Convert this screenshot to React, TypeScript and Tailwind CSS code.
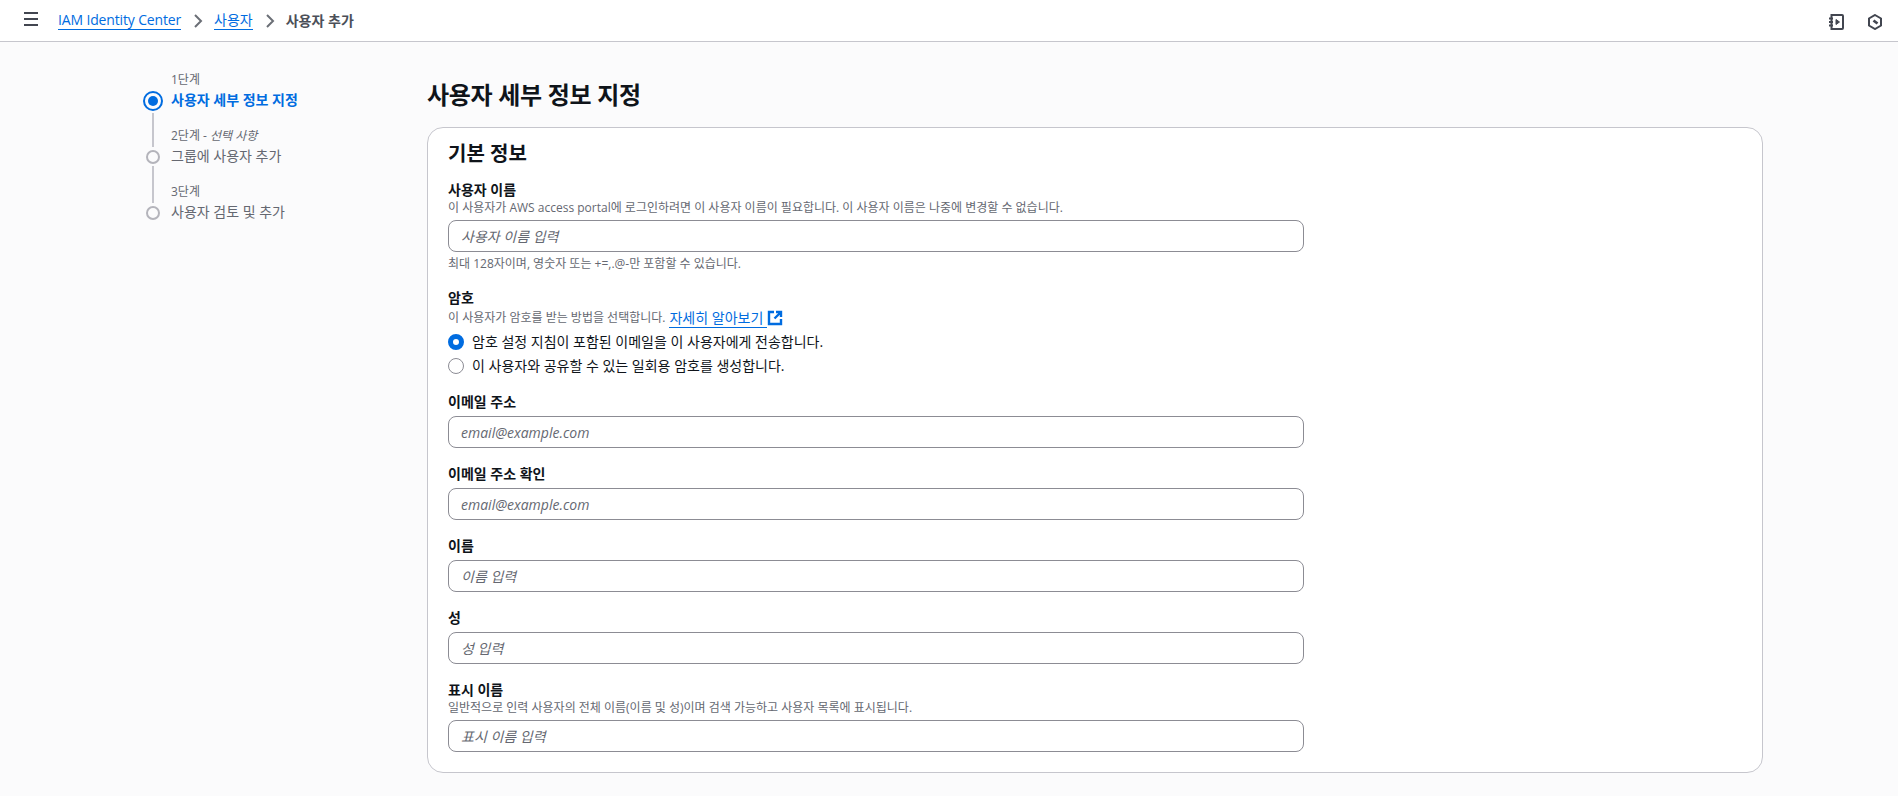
const FONT = "font-['Open_Sans','Noto_Sans_CJK_KR',sans-serif]";

const STEPS = [
  { step: "1단계", title: "사용자 세부 정보 지정", active: true },
  { step: "2단계", optional: "선택 사항", title: "그룹에 사용자 추가" },
  { step: "3단계", title: "사용자 검토 및 추가" },
];

function Chevron() {
  return (
    <svg viewBox="0 0 16 16" className="w-4 h-4 text-[#6b6f76]" fill="none" stroke="currentColor" strokeWidth="2">
      <path d="M5 2 11 8 5 14" />
    </svg>
  );
}

function TextField({ placeholder }: { placeholder: string }) {
  return (
    <input
      placeholder={placeholder}
      className="block w-[856px] h-[32px] rounded-lg border border-[#8c8c94] bg-white px-3 text-sm italic text-[#0f141a] placeholder:text-[#656871] outline-none"
    />
  );
}

function Field({
  label,
  desc,
  placeholder,
  className,
}: {
  label: string;
  desc?: string;
  placeholder: string;
  className?: string;
}) {
  return (
    <div className={className}>
      <div className="text-sm font-bold leading-[18px] text-[#0f141a]">{label}</div>
      {desc ? <div className="mt-px text-xs leading-[16px] text-[#656871]">{desc}</div> : null}
      <div className={desc ? "mt-1" : "mt-[5px]"}>
        <TextField placeholder={placeholder} />
      </div>
    </div>
  );
}

function Radio({ checked, label }: { checked?: boolean; label: string }) {
  return (
    <label className="flex items-center gap-2 h-[24px] text-sm text-[#0f141a]">
      <span
        className={
          checked
            ? "w-4 h-4 rounded-full border-[5px] border-[#006ce0] bg-white"
            : "w-4 h-4 rounded-full border border-[#8c8c94] bg-white"
        }
      />
      {label}
    </label>
  );
}

export default function App() {
  return (
    <div className={`${FONT} min-h-[796px] bg-[#fbfbfc] text-[#0f141a]`}>
      <header className="h-[42px] bg-white border-b border-[#c6c6cd] flex items-center pl-[23px] pr-[15px]">
        <svg viewBox="0 0 16 16" className="w-4 h-4 text-[#424650] -mt-[3px]" fill="none" stroke="currentColor" strokeWidth="2">
          <path d="M1 2h14M1 8h14M1 14h14" />
        </svg>
        <nav className="flex items-center ml-[19px] text-sm">
          <a className="text-[#006ce0] border-b border-[#006ce0] leading-[18px] tracking-[-0.15px]">IAM Identity Center</a>
          <span className="ml-[9px] mr-[8px]"><Chevron /></span>
          <a className="text-[#006ce0] border-b border-[#006ce0] leading-[18px]">사용자</a>
          <span className="ml-[9px] mr-[8px]"><Chevron /></span>
          <span className="font-bold text-[#4b4f58]">사용자 추가</span>
        </nav>
        <div className="ml-auto flex items-center gap-[23px] mt-[2px]">
          <svg viewBox="0 0 16 16" className="w-4 h-4 text-[#424650]" fill="none" stroke="currentColor" strokeWidth="2">
            <path d="M3.500 1h10.500a1 1 0 0 1 1 1v12a1 1 0 0 1-1 1H3.500V1Z" />
            <path d="M1 4.500h4M1 8h4M1 11.500h4" />
            <path d="M8 5.500v5L11.500 8Z" fill="currentColor" strokeWidth="1" />
          </svg>
          <svg viewBox="0 0 16 16" className="w-4 h-4 text-[#424650]" fill="none" stroke="currentColor" strokeWidth="2">
            <path d="M8 1 14 4.500v7L8 15l-6-3.500v-7Z" />
            <path d="M6.500 6.500 10.500 9.500" strokeWidth="2.800" />
          </svg>
        </div>
      </header>

      <div className="flex">
        <aside className="w-[427px] shrink-0 pl-[143px] pt-[29px]">
          <ol>
            {STEPS.map((s, i) => (
              <li key={s.step} className="relative h-[56px] pl-[28px] pt-px">
                <div className="text-xs leading-[16px] text-[#656871]">
                  {s.step}
                  {s.optional ? (
                    <>
                      {" - "}
                      <i>{s.optional}</i>
                    </>
                  ) : null}
                </div>
                <div
                  className={
                    s.active
                      ? "text-sm leading-[20px] mt-[2px] font-bold text-[#006ce0]"
                      : "text-sm leading-[20px] mt-[2px] text-[#656871]"
                  }
                >
                  {s.title}
                </div>
                {s.active ? (
                  <span className="absolute left-0 top-[20px] w-[20px] h-[20px] rounded-full border-2 border-[#006ce0] flex items-center justify-center">
                    <span className="w-[10px] h-[10px] rounded-full bg-[#006ce0]" />
                  </span>
                ) : (
                  <span className="absolute left-[3px] top-[23px] w-[14px] h-[14px] rounded-full border-2 border-[#b4b4bb]" />
                )}
                {i === 0 ? <span className="absolute left-[9px] top-[42px] h-[34px] w-[2px] bg-[#c6c6cd]" /> : null}
                {i === 1 ? <span className="absolute left-[9px] top-[39px] h-[37px] w-[2px] bg-[#c6c6cd]" /> : null}
              </li>
            ))}
          </ol>
        </aside>

        <main className="w-[1336px] pt-[38px]">
          <h1 className="text-2xl leading-[30px] font-bold tracking-[-0.3px] text-[#0f141a]">
            사용자 세부 정보 지정
          </h1>
          <section className="mt-[17px] rounded-2xl border border-[#c6c6cd] bg-white px-5 pt-[13px] pb-5">
            <h2 className="text-xl leading-[26px] font-bold">기본 정보</h2>

            <Field
              className="mt-[14px]"
              label="사용자 이름"
              desc="이 사용자가 AWS access portal에 로그인하려면 이 사용자 이름이 필요합니다. 이 사용자 이름은 나중에 변경할 수 없습니다."
              placeholder="사용자 이름 입력"
            />
            <div className="text-xs leading-[16px] text-[#656871] mt-1">
              최대 128자이며, 영숫자 또는 +=,.@-만 포함할 수 있습니다.
            </div>

            <div className="mt-[17px]">
              <div className="text-sm font-bold leading-[18px]">암호</div>
              <div className="flex items-center h-[20px] text-xs leading-[20px] text-[#656871] mt-px">
                이 사용자가 암호를 받는 방법을 선택합니다.
                <a className="ml-1 flex items-center text-sm text-[#006ce0]">
                  <span className="border-b border-[#006ce0] pr-[4px] leading-[19px]">자세히 알아보기</span>
                  <svg viewBox="0 0 16 16" className="w-4 h-4" fill="none" stroke="currentColor" strokeWidth="2.400">
                    <path d="M7 2H2v12h12V9" />
                    <path d="M9 2h5v5M14 2 7.500 8.500" />
                  </svg>
                </a>
              </div>
              <div className="mt-[2px]">
                <Radio checked label="암호 설정 지침이 포함된 이메일을 이 사용자에게 전송합니다." />
                <Radio label="이 사용자와 공유할 수 있는 일회용 암호를 생성합니다." />
              </div>
            </div>

            <div className="flex flex-col gap-[17px] mt-[15px]">
              <Field label="이메일 주소" placeholder="email@example.com" />
              <Field label="이메일 주소 확인" placeholder="email@example.com" />
              <Field label="이름" placeholder="이름 입력" />
              <Field label="성" placeholder="성 입력" />
              <Field
                label="표시 이름"
                desc="일반적으로 인력 사용자의 전체 이름(이름 및 성)이며 검색 가능하고 사용자 목록에 표시됩니다."
                placeholder="표시 이름 입력"
              />
            </div>
          </section>
        </main>
      </div>
    </div>
  );
}
